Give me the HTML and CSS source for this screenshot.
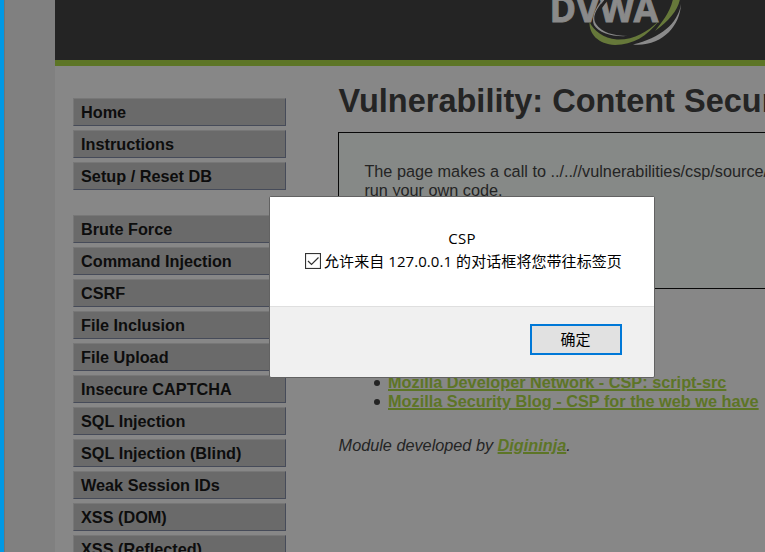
FILE: index.html
```html
<!DOCTYPE html>
<html lang="zh-CN">
<head>
<meta charset="utf-8">
<title>DVWA</title>
<link rel="stylesheet" href="styles.css">
</head>
<body>
<div class="page">
  <header class="header">
    <svg class="logo" width="160" height="46" viewBox="0 0 160 46">
      <text class="logo-text" x="19.500 46 69.500 103.500" y="21.500">DVWA</text>
      <path class="gap" d="M77-1C67 11 63 18 68 25C74 33 84 36 97 36" />
      <path class="silver" d="M75-1C65 10 62 18 66 24C72 33 83 35.500 98 36C82 37 69 33 64 25C61 18 65 8 73-1Z" />
      <path class="green" d="M59.500 22C64 31 73 38 87 39.500C104 40 117 32 129 21C117 36 103 45 85 45C68 44 59 34 59.500 22Z" />
      <path class="green" d="M143-1C140 13 131 23 125 31C139 21 148 10 150-1Z" />
      <path class="silver" d="M151 4C148 24 130 38 103 44.500C132 47 150 26 151 4Z" />
    </svg>
  </header>
  <div class="body">
    <nav class="menu">
      <ul class="group">
        <li>Home</li>
        <li>Instructions</li>
        <li>Setup / Reset DB</li>
      </ul>
      <ul class="group">
        <li>Brute Force</li>
        <li>Command Injection</li>
        <li>CSRF</li>
        <li>File Inclusion</li>
        <li>File Upload</li>
        <li>Insecure CAPTCHA</li>
        <li>SQL Injection</li>
        <li>SQL Injection (Blind)</li>
        <li>Weak Session IDs</li>
        <li>XSS (DOM)</li>
        <li>XSS (Reflected)</li>
      </ul>
    </nav>
    <main class="main">
      <h1>Vulnerability: Content Security</h1>
      <div class="panel">
        <p>The page makes a call to ../..//vulnerabilities/csp/source/<br>run your own code.</p>
      </div>
      <ul class="links">
        <li><a>Mozilla Developer Network - CSP: script-src</a></li>
        <li><a>Mozilla Security Blog - CSP for the web we have</a></li>
      </ul>
      <p class="credit">Module developed by <a>Digininja</a>.</p>
    </main>
  </div>
</div>
<div class="dialog">
  <div class="message">
    <div class="title">CSP</div>
    <div class="option">
      <svg class="check" width="16" height="16" viewBox="0 0 16 16"><rect x=".5" y=".5" width="15" height="15"/><path d="M3 8L6.500 11.500L13.500 4.500"/></svg>
      <span class="label">允许来自 127.0.0.1 的对话框将您带往标签页</span>
    </div>
  </div>
  <div class="actions"><button class="ok">确定</button></div>
</div>
</body>
</html>
```
FILE: styles.css
```css
* { box-sizing: border-box; }
html, body { margin: 0; height: 552px; overflow: hidden; }
body {
  background: #808080;
  border-left: 4px solid #0099e5;
  font: 16.25px/19px "Liberation Sans", Arial, sans-serif;
  color: #242424;
}
.page {
  height: 552px;
  border-left: 1px solid #6f7478;
  padding-left: 50px;
  overflow: hidden;
}
.header {
  height: 66px;
  background: #242424;
  border-bottom: 6px solid #5d7526;
  padding-left: 475px;
}
.logo { display: block; overflow: visible; }
.logo-text { font: bold 36px "Open Sans", sans-serif; fill: #8a8a8a; stroke: #8a8a8a; stroke-width: .8; }
.silver { fill: #8a8a8a; }
.green { fill: #66783a; }
.gap { fill: none; stroke: #242424; stroke-width: 3; }
.body {
  display: flex;
  height: 486px;
  background: #878787;
}
.menu { width: 231px; flex: none; padding: 32px 0 0 18px; }
ul { list-style: none; margin: 0; padding: 0; }
.group { margin-bottom: 25px; }
.group li {
  height: 28px;
  margin-bottom: 4px;
  padding-left: 7px;
  border: 1px solid;
  border-color: #777 #464b59 #464b59 #777;
  background: #6a6a6a;
  color: #0d0d0d;
  font-weight: bold;
  line-height: 27px;
  white-space: nowrap;
}
.main { padding: 15px 0 0 52px; white-space: nowrap; }
h1 { margin: 0; font-size: 32.5px; line-height: 40px; padding-left: .5px; }
.panel {
  width: 700px;
  height: 157px;
  margin-top: 11px;
  border: 1px solid #080808;
  background: #868987;
  padding: 29px 25.4px;
}
p { margin: 0; }
.links { margin-top: 84px; padding-left: 36px; font-weight: bold; font-size: 16.3px; }
.links li { display: flex; align-items: center; gap: 8px; }
.links li::before { content: ""; width: 6px; height: 6px; border-radius: 50%; background: #242424; }
a { color: #5d7526; font-weight: bold; text-decoration: underline; text-decoration-thickness: 2px; }
.credit { margin-top: 25px; padding-left: .6px; font-style: italic; }
.dialog {
  position: absolute;
  left: 269px;
  top: 196px;
  width: 386px;
  height: 182px;
  border: 1px solid #626262;
  border-radius: 2px;
  background: #f0f0f0;
  color: #000;
  font: 15px/20px "Open Sans", "Noto Sans CJK SC", sans-serif;
}
.message { height: 110px; background: #fff; border-bottom: 1px solid #dfdfdf; padding-top: 31px; }
.title { text-align: center; height: 23px; letter-spacing: .3px; }
.option { display: flex; align-items: center; gap: 3px; padding-left: 35px; height: 20px; white-space: nowrap; }
.label { letter-spacing: .07px; }
.check { flex: none; fill: none; stroke: #333; stroke-width: 1.2; }
.actions { display: flex; justify-content: flex-end; padding: 17px 32px 0 0; }
.ok {
  width: 92px;
  height: 31px;
  border: 2px solid #0078d7;
  background: #e1e1e1;
  color: #000;
  font: inherit;
  padding: 0 1px 2px 0;
}
```
